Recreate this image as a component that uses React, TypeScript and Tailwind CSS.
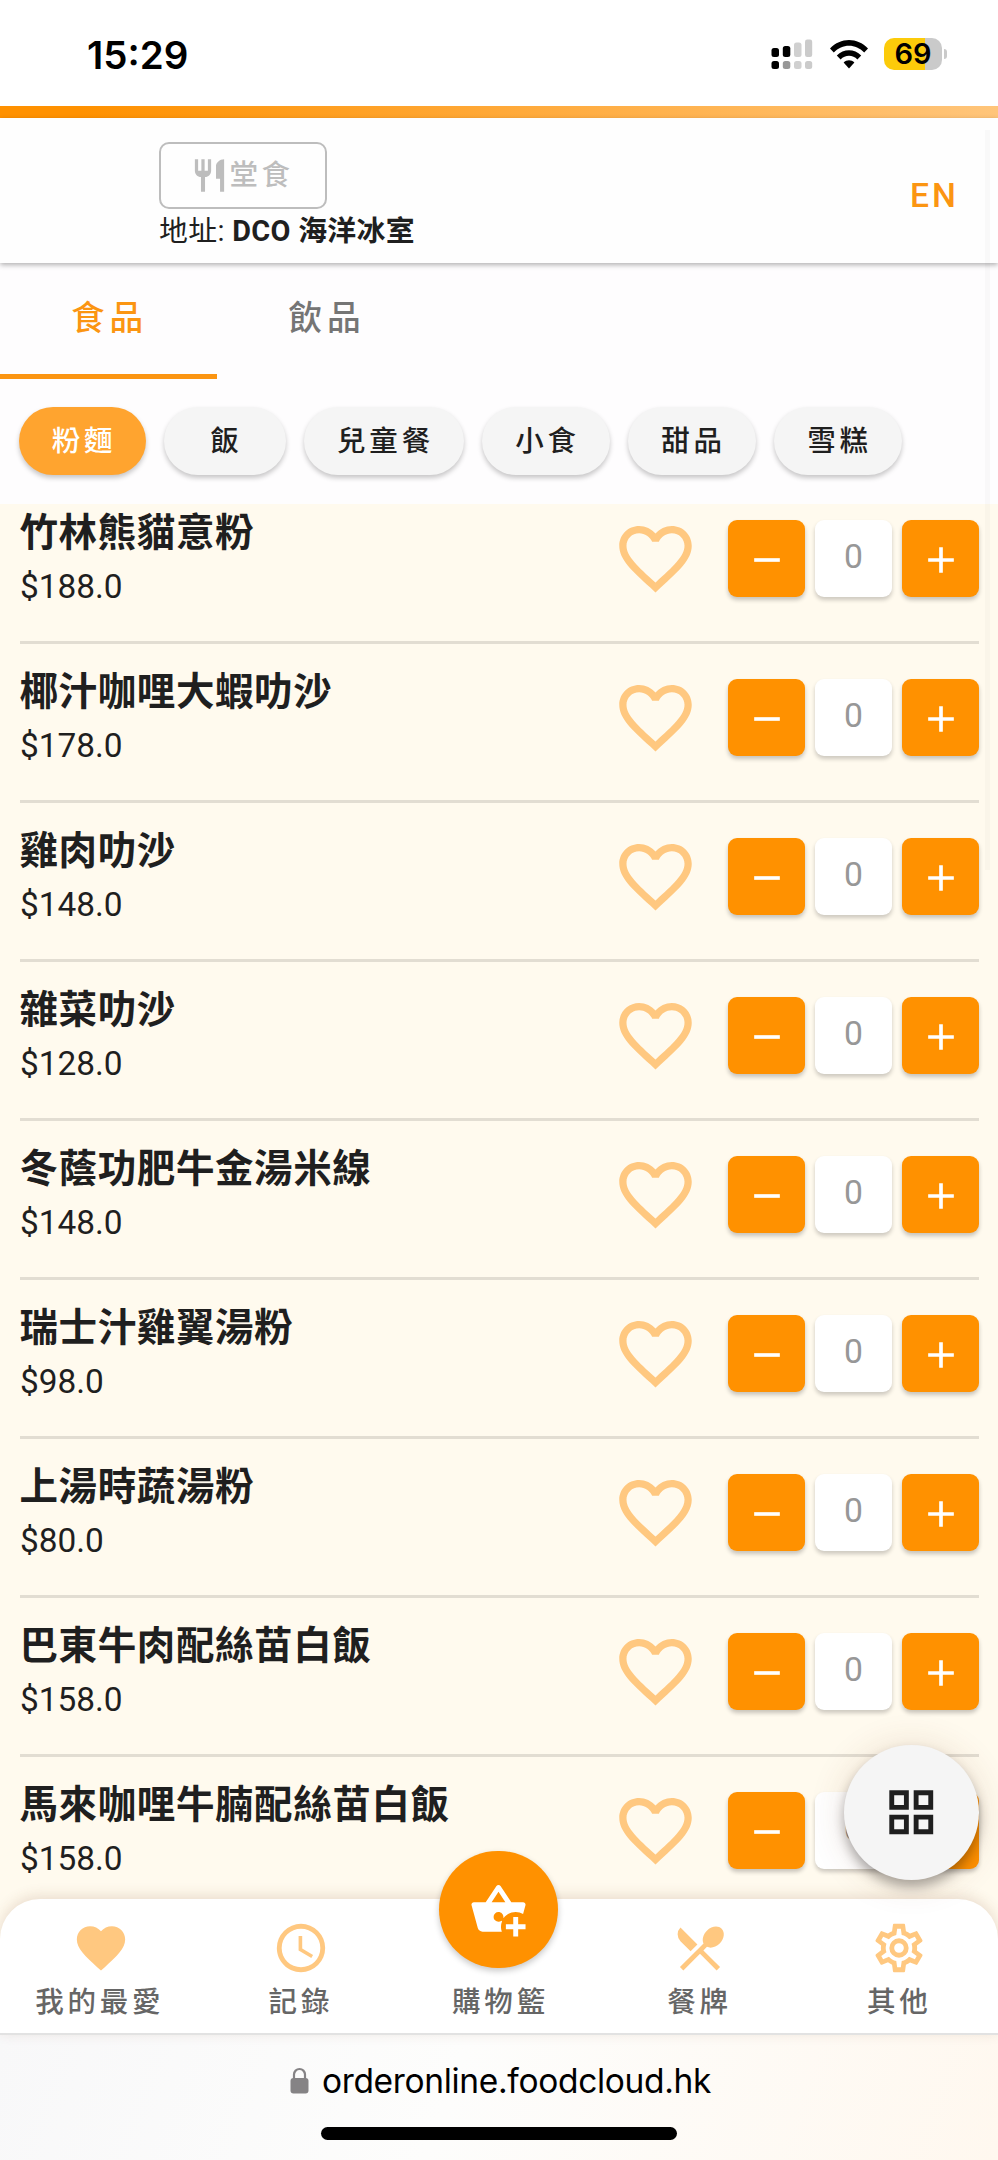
import { MdRestaurantMenu } from 'react-icons/md';

interface MenuItem {
  name: string;
  price: string;
}

interface IconProps {
  path: string;
  className?: string;
}

const icons = {
  silverware:
    'M11,9H9V2H7V9H5V2H3V9C3,11.12 4.66,12.84 6.75,12.97V22H9.25V12.97C11.34,12.84 13,11.12 13,9V2H11V9M16,6V14H18.5V22H21V2C18.24,2 16,4.24 16,6Z',
  heart:
    'M12,21.35L10.55,20.03C5.4,15.36 2,12.27 2,8.5C2,5.41 4.42,3 7.5,3C9.24,3 10.91,3.81 12,5.08C13.09,3.81 14.76,3 16.5,3C19.58,3 22,5.41 22,8.5C22,12.27 18.6,15.36 13.45,20.03L12,21.35Z',
  heartOutline:
    'M12.1,18.55L12,18.65L11.89,18.55C7.14,14.24 4,11.39 4,8.5C4,6.5 5.5,5 7.5,5C9.04,5 10.54,6 11.07,7.36H12.93C13.46,6 14.96,5 16.5,5C18.5,5 20,6.5 20,8.5C20,11.39 16.86,14.24 12.1,18.55M16.5,3C14.76,3 13.09,3.81 12,5.08C10.91,3.81 9.24,3 7.5,3C4.42,3 2,5.41 2,8.5C2,12.27 5.4,15.36 10.55,20.03L12,21.35L13.45,20.03C18.6,15.36 22,12.27 22,8.5C22,5.41 19.58,3 16.5,3Z',
  minus: 'M19,13H5V11H19V13Z',
  plus: 'M19,13H13V19H11V13H5V11H11V5H13V11H19V13Z',
  clock:
    'M12,20A8,8 0 0,0 20,12A8,8 0 0,0 12,4A8,8 0 0,0 4,12A8,8 0 0,0 12,20M12,2A10,10 0 0,1 22,12A10,10 0 0,1 12,22C6.47,22 2,17.5 2,12A10,10 0 0,1 12,2M12.5,7V12.25L17,14.92L16.25,16.15L11,13V7H12.5Z',
  basketPlus:
    'M22,9H17.21L12.83,2.44C12.64,2.16 12.32,2 12,2C11.68,2 11.36,2.16 11.17,2.45L6.79,9H2C1.45,9 1,9.45 1,10C1,10.09 1,10.18 1.04,10.27L3.58,19.54C3.81,20.38 4.58,21 5.5,21H13.35C13.12,20.37 13,19.7 13,19C13,18.2 13.16,17.44 13.45,16.74L13.2,16.6C12.87,16.85 12.45,17 12,17A2,2 0 0,1 10,15A2,2 0 0,1 12,13C13.1,13 14,13.9 14,15L14.05,15.6C15.13,14.03 16.94,13 19,13C20.09,13 21.12,13.29 22,13.8L22.97,10.29L23,10C23,9.45 22.55,9 22,9M12,4.8L14.8,9H9.2L12,4.8M18,15V18H15V20H18V23H20V20H23V18H20V15H18Z',
  cog: 'M12,8A4,4 0 0,1 16,12A4,4 0 0,1 12,16A4,4 0 0,1 8,12A4,4 0 0,1 12,8M12,10A2,2 0 0,0 10,12A2,2 0 0,0 12,14A2,2 0 0,0 14,12A2,2 0 0,0 12,10M10,22C9.75,22 9.54,21.82 9.5,21.58L9.13,18.93C8.5,18.68 7.96,18.34 7.44,17.94L4.95,18.95C4.73,19.03 4.46,18.95 4.34,18.73L2.34,15.27C2.21,15.05 2.27,14.78 2.46,14.63L4.57,12.97L4.5,12L4.57,11L2.46,9.37C2.27,9.22 2.21,8.95 2.34,8.73L4.34,5.27C4.46,5.05 4.73,4.96 4.95,5.05L7.44,6.05C7.96,5.66 8.5,5.32 9.13,5.07L9.5,2.42C9.54,2.18 9.75,2 10,2H14C14.25,2 14.46,2.18 14.5,2.42L14.87,5.07C15.5,5.32 16.04,5.66 16.56,6.05L19.05,5.05C19.27,4.96 19.54,5.05 19.66,5.27L21.66,8.73C21.79,8.95 21.73,9.22 21.54,9.37L19.43,11L19.5,12L19.43,13L21.54,14.63C21.73,14.78 21.79,15.05 21.66,15.27L19.66,18.73C19.54,18.95 19.27,19.04 19.05,18.95L16.56,17.95C16.04,18.34 15.5,18.68 14.87,18.93L14.5,21.58C14.46,21.82 14.25,22 14,22H10M11.25,4L10.88,6.61C9.68,6.86 8.62,7.5 7.85,8.39L5.44,7.35L4.69,8.65L6.8,10.2C6.4,11.37 6.4,12.64 6.8,13.8L4.68,15.36L5.43,16.66L7.86,15.62C8.63,16.5 9.68,17.14 10.87,17.38L11.24,20H12.76L13.13,17.39C14.32,17.14 15.37,16.5 16.14,15.62L18.57,16.66L19.32,15.36L17.2,13.81C17.6,12.64 17.6,11.37 17.2,10.2L19.31,8.65L18.56,7.35L16.15,8.39C15.38,7.5 14.32,6.86 13.12,6.62L12.75,4H11.25Z',
  grid: 'M3,11H11V3H3M5,5H9V9H5M13,21H21V13H13M15,15H19V19H15M3,21H11V13H3M5,15H9V19H5M13,3V11H21V3M19,9H15V5H19Z',
};

const categories = [
  { label: '粉麵', className: 'w-[127px] bg-[#ffa42f] text-white' },
  { label: '飯', className: 'w-[122px] bg-[#f5f5f5]' },
  { label: '兒童餐', className: 'w-[160px] bg-[#f5f5f5]' },
  { label: '小食', className: 'w-[128px] bg-[#f5f5f5]' },
  { label: '甜品', className: 'w-[128px] bg-[#f5f5f5]' },
  { label: '雪糕', className: 'w-[128px] bg-[#f5f5f5]' },
];

const items: MenuItem[] = [
  { name: '竹林熊貓意粉', price: '$188.0' },
  { name: '椰汁咖哩大蝦叻沙', price: '$178.0' },
  { name: '雞肉叻沙', price: '$148.0' },
  { name: '雜菜叻沙', price: '$128.0' },
  { name: '冬蔭功肥牛金湯米線', price: '$148.0' },
  { name: '瑞士汁雞翼湯粉', price: '$98.0' },
  { name: '上湯時蔬湯粉', price: '$80.0' },
  { name: '巴東牛肉配絲苗白飯', price: '$158.0' },
  { name: '馬來咖哩牛腩配絲苗白飯', price: '$158.0' },
];

const Icon = ({ path, className }: IconProps) => (
  <svg viewBox="0 0 24 24" fill="currentColor" className={className}>
    <path d={path} fillRule="evenodd" />
  </svg>
);

const StatusBar = () => (
  <div className="h-[106px] shrink-0 flex items-start justify-between pl-[87px] pr-[51px] bg-white text-black font-['Inter',sans-serif]">
    <span className="mt-[31px] text-[38.5px] leading-[48px] font-semibold">15:29</span>
    <div className="flex items-center mt-[38px] h-8">
      <svg viewBox="0 0 42 32" className="w-[42px] h-8">
        <rect x="0.5" y="10" width="7.5" height="9" rx="2.5" />
        <rect x="11.8" y="8" width="7.5" height="11" rx="2.5" />
        <rect x="23" y="4.5" width="7.5" height="14.5" rx="2.5" fill="#d0d0d0" />
        <rect x="34" y="1.5" width="7.2" height="17.5" rx="2.2" fill="#cbcbcb" />
        <rect x="0.5" y="23" width="7.5" height="8" rx="2.5" />
        <rect x="11.8" y="23" width="7.5" height="8" rx="2.5" fill="#979797" />
        <rect x="23" y="23" width="7.5" height="8" rx="2.5" fill="#d0d0d0" />
        <rect x="34" y="23" width="7.2" height="8" rx="2.5" fill="#cbcbcb" />
      </svg>
      <svg viewBox="0 0 38 29" className="w-[38px] h-[29px] ml-[17px]">
        <path d="M0 8.6C10.5-2.8 27.5-2.8 38 8.6L34.2 12.5C25.8 3.4 12.2 3.4 3.8 12.5Z" />
        <path d="M6.8 15.6C13.5 8.4 24.5 8.4 31.2 15.6L27.4 19.4C22.8 14.4 15.2 14.4 10.6 19.4Z" />
        <path d="M13.6 22.6C16.6 19.4 21.4 19.4 24.4 22.6L19 28.4Z" />
      </svg>
      <div className="flex items-center justify-center w-[58px] h-8 ml-4 rounded-[10px] bg-[linear-gradient(90deg,#fccb0a_70%,#cacaca_70%)] text-[29px] leading-8 font-semibold">
        69
      </div>
      <div className="w-[3px] h-[10px] ml-[2px] rounded-r-full bg-[#cacaca]" />
    </div>
  </div>
);

const Header = () => (
  <header className="relative z-10 h-[145px] shrink-0 flex justify-between pl-[159px] pr-[39px] bg-[#fefefe] shadow-[0_2px_5px_rgba(0,0,0,0.3)]">
    <div className="pt-[24px]">
      <button className="flex items-center justify-center w-[168px] h-[67px] rounded-[10px] border-[2.4px] border-[#bdbdbd] text-[#bdbdbd] text-[28.5px] font-medium tracking-[3.6px]">
        <Icon path={icons.silverware} className="w-[39px] h-[39px] -ml-[2px]" />
        <span className="pt-[1px]">堂食</span>
      </button>
      <p className="mt-[1px] text-[28.9px] leading-[42px] tracking-[0.3px]">
        地址: <b>DCO 海洋冰室</b>
      </p>
    </div>
    <button className="mt-[58px] h-10 leading-10 text-[33.7px] font-medium tracking-[3px] text-[#fb9512]">EN</button>
  </header>
);

const Tabs = () => (
  <div className="h-[116px] shrink-0 flex bg-[#fefdfe] text-[33.7px] font-medium tracking-[4.8px]">
    <button className="w-[217px] h-[116px] pt-[1px] text-[#fb9512] border-b-[5px] border-[#fb9512] pl-[2px]">食品</button>
    <button className="w-[217px] h-[116px] pb-[4px] pl-[3px] text-[#757575]">飲品</button>
  </div>
);

const Stepper = () => (
  <div className="flex gap-[10px]">
    <button className="flex items-center justify-center w-[77px] h-[77px] rounded-[9px] bg-[#ff9100] text-white shadow-[0_3px_4px_rgba(0,0,0,0.22)]">
      <Icon path={icons.minus} className="w-[44px] h-[44px] mt-[2px]" />
    </button>
    <div className="w-[77px] h-[77px] rounded-[9px] bg-white text-center text-[33.7px] leading-[74px] text-[#979797] shadow-[0_3px_4px_rgba(0,0,0,0.2)]">
      0
    </div>
    <button className="flex items-center justify-center w-[77px] h-[77px] rounded-[9px] bg-[#ff9100] text-white shadow-[0_3px_4px_rgba(0,0,0,0.22)]">
      <Icon path={icons.plus} className="w-[44px] h-[44px] mt-[2px]" />
    </button>
  </div>
);

const MenuRow = ({ name, price }: MenuItem) => (
  <li className="flex items-start h-[159px] ml-5 mr-[19px] border-b-[3px] border-[#e2ddd2]">
    <div className="flex-1 pt-[24px]">
      <h3 className="text-[38.5px] leading-[48px] font-bold tracking-[0.6px] -ml-[0.5px]">{name}</h3>
      <p className="mt-[6px] text-[33.4px] leading-[48px]">{price}</p>
    </div>
    <Icon path={icons.heartOutline} className="w-[87px] h-[87px] mt-[30px] mr-[29px] text-[#ffc880]" />
    <div className="mt-[35px]">
      <Stepper />
    </div>
  </li>
);

const BottomNav = () => (
  <nav className="relative h-[136px] shrink-0 grid grid-cols-5 rounded-t-[40px] border-b-2 border-[#e2e2e2] bg-white text-[28.5px] font-medium tracking-[3.8px] text-[#666] shadow-[0_-3px_14px_rgba(120,60,30,0.16)]">
    <button className="flex flex-col items-center pt-5">
      <Icon path={icons.heart} className="w-[58px] h-[58px] text-[#ffc880] mr-[-2px]" />
      <span className="leading-[52px]">我的最愛</span>
    </button>
    <button className="flex flex-col items-center pt-5">
      <Icon path={icons.clock} className="w-[58px] h-[58px] text-[#ffc880] mr-[-3px]" />
      <span className="leading-[52px] pl-[3px]">記錄</span>
    </button>
    <button className="flex flex-col items-center pt-[78px]">
      <span className="leading-[52px] pl-[3px]">購物籃</span>
    </button>
    <button className="flex flex-col items-center pt-5">
      <MdRestaurantMenu className="w-[58px] h-[58px] text-[#ffc880] mr-[-2px]" />
      <span className="leading-[52px] pl-[2px]">餐牌</span>
    </button>
    <button className="flex flex-col items-center pt-5">
      <Icon path={icons.cog} className="w-[58px] h-[58px] text-[#ffc880] mr-[-2px]" />
      <span className="leading-[52px] pl-[2px]">其他</span>
    </button>
    {/* cart button sits half above the bar */}
    <button className="absolute left-[439px] -top-[48px] flex items-center justify-center w-[119px] h-[117px] rounded-full bg-[#ff9100] text-white shadow-[0_3px_6px_rgba(0,0,0,0.22)]">
      <Icon path={icons.basketPlus} className="w-[59px] h-[59px]" />
    </button>
  </nav>
);

const AddressBar = () => (
  <footer className="h-[125px] shrink-0 flex flex-col items-center bg-[linear-gradient(110deg,#f8f8f9_0%,#fdfdfc_45%,#fff8ef_100%)] text-black">
    <div className="flex items-center mt-[20px] h-[52px] pl-[3px] font-['Inter',sans-serif]">
      <svg viewBox="0 0 19 27" className="w-[19px] h-[27px] mr-[13px] -mt-[2px]">
        <path d="M4 12V7.5a5.5 5.5 0 0 1 11 0V12" fill="none" stroke="#858385" strokeWidth="2.2" />
        <rect x="0.5" y="11" width="18" height="15.5" rx="3" fill="#858385" />
      </svg>
      <span className="text-[33.5px] leading-[52px] tracking-[-0.32px]">orderonline.foodcloud.hk</span>
    </div>
    <div className="w-[356px] h-[12.5px] mt-[20px] rounded-full bg-black" />
  </footer>
);

const App = () => (
  <div className="relative flex flex-col w-[998px] h-[2160px] overflow-hidden bg-[#fffaee] text-[#1f1f1f] font-['Roboto','Noto_Sans_CJK_TC',sans-serif]">
    <StatusBar />
    <div className="h-3 shrink-0 bg-[linear-gradient(90deg,#ff9100_8%,#ffc57a_100%)]" />
    <Header />
    <Tabs />
    <div className="h-[125px] shrink-0 flex gap-[18px] pt-[28px] pl-[19px] bg-[#fefdfe]">
      {categories.map((c) => (
        <button
          key={c.label}
          className={`${c.className} h-[68px] rounded-full text-[28.5px] font-medium tracking-[3.8px] pl-[3px] pt-[2px] shadow-[0_3px_5px_rgba(0,0,0,0.22)]`}
        >
          {c.label}
        </button>
      ))}
    </div>
    <main className="flex-1 min-h-0 overflow-hidden">
      <ul className="-mt-[19px]">
        {items.map((item) => (
          <MenuRow key={item.name} {...item} />
        ))}
      </ul>
    </main>
    <BottomNav />
    <AddressBar />
    <div className="absolute z-20 left-[985px] top-[130px] w-[5px] h-[740px] bg-black/[0.02]" />
    <button className="absolute left-[844px] top-[1745px] flex items-center justify-center w-[135px] h-[135px] rounded-full bg-[#f5f5f5] shadow-[0_7px_12px_rgba(0,0,0,0.3),0_2px_36px_rgba(120,60,30,0.16)]">
      <Icon path={icons.grid} className="w-[58.5px] h-[58.5px]" />
    </button>
  </div>
);

export default App;
